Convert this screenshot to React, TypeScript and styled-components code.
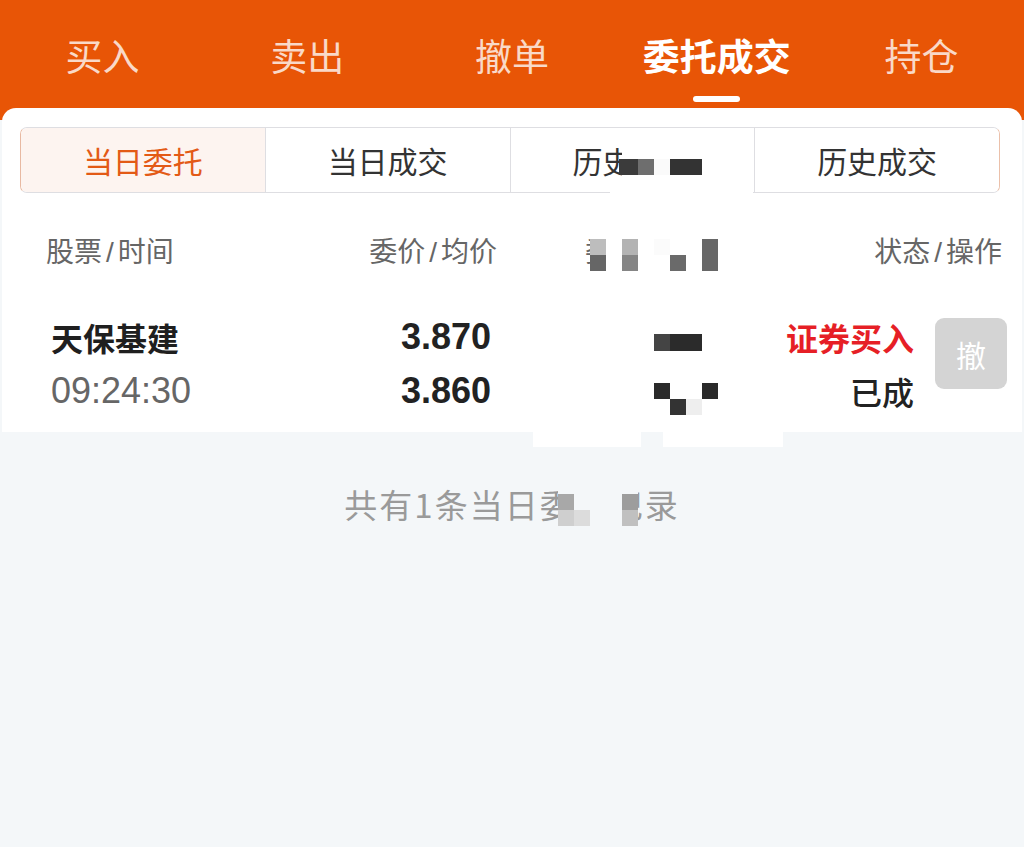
import React, { FC } from "react";
import styled, { createGlobalStyle } from "styled-components";

const GlobalStyle = createGlobalStyle`
  html, body {
    margin: 0;
    padding: 0;
    background: #f4f7f9;
  }
  body {
    font-family: "Liberation Sans", "Noto Sans CJK SC", sans-serif;
    -webkit-font-smoothing: antialiased;
  }
`;

const Page = styled.div`
  position: relative;
  width: 1024px;
  min-height: 847px;
  background: #f4f7f9;
  overflow: hidden;
`;

const TopBar = styled.nav`
  display: flex;
  height: 120px;
  background: #e85506;
`;

const TopTab = styled.div<{ $active?: boolean }>`
  flex: 1;
  display: flex;
  flex-direction: column;
  align-items: center;
  padding-top: 30px;
  font-family: "Noto Sans CJK SC", sans-serif;
  font-size: 37px;
  line-height: 50px;
  font-weight: ${(p) => (p.$active ? 700 : 400)};
  color: ${(p) => (p.$active ? "#ffffff" : "rgba(255, 255, 255, 0.78)")};
`;

const Indicator = styled.span<{ $show?: boolean }>`
  margin-top: 16px;
  width: 47px;
  height: 6px;
  border-radius: 3px;
  background: ${(p) => (p.$show ? "#ffffff" : "transparent")};
`;

const Card = styled.section`
  position: relative;
  margin: -12px 2px 0;
  padding-top: 19px;
  background: #ffffff;
  border-radius: 14px 14px 0 0;
`;

const Segments = styled.div`
  display: flex;
  margin: 0 22px 0 18px;
  height: 66px;
  box-sizing: border-box;
  border: 1px solid #dedee2;
  border-left-color: #e8b9a2;
  border-right-color: #ebc0aa;
  border-radius: 7px;
  overflow: hidden;
`;

const Segment = styled.div<{ $active?: boolean }>`
  flex: 1;
  display: flex;
  align-items: center;
  justify-content: center;
  font-family: "Noto Sans CJK SC", sans-serif;
  font-size: 30px;
  color: ${(p) => (p.$active ? "#e35a16" : "#333333")};
  background: ${(p) => (p.$active ? "#fdf4f0" : "#ffffff")};
  & + & {
    border-left: 1px solid #dedee2;
  }
`;

const HeadRow = styled.div`
  display: flex;
  align-items: center;
  height: 114px;
  padding: 0 20px 0 44px;
  font-family: "Noto Sans CJK SC", sans-serif;
  font-size: 28px;
  color: #666666;
`;

const HeadCell = styled.div<{ $w?: number; $align?: string; $offset?: number }>`
  width: ${(p) => (p.$w ? `${p.$w}px` : "auto")};
  flex: ${(p) => (p.$w ? "none" : "1")};
  margin-left: ${(p) => p.$offset || 0}px;
  text-align: ${(p) => p.$align || "left"};
`;

const Slash = styled.span`
  margin: 0 4px;
  font-family: "Liberation Sans", sans-serif;
`;

const OrderRow = styled.div`
  display: flex;
  align-items: flex-start;
  padding: 3px 15px 14px 49px;
`;

const Cell = styled.div<{ $w?: number; $align?: string }>`
  display: flex;
  flex-direction: column;
  width: ${(p) => (p.$w ? `${p.$w}px` : "auto")};
  flex: ${(p) => (p.$w ? "none" : "1")};
  align-items: ${(p) => (p.$align === "right" ? "flex-end" : "flex-start")};
`;

const StockName = styled.span`
  font-family: "Noto Sans CJK SC", sans-serif;
  font-size: 32px;
  line-height: 54px;
  font-weight: 600;
  color: #1f1f1f;
`;

const Time = styled.span`
  font-size: 36px;
  line-height: 54px;
  color: #666666;
`;

const Price = styled.span`
  font-size: 36px;
  line-height: 54px;
  font-weight: 700;
  color: #222222;
`;

const Status = styled.span<{ $tone?: "buy" | "plain" }>`
  font-family: "Noto Sans CJK SC", sans-serif;
  font-size: 32px;
  line-height: 54px;
  font-weight: ${(p) => (p.$tone === "buy" ? 600 : 500)};
  color: ${(p) => (p.$tone === "buy" ? "#e61f26" : "#222222")};
`;

const CancelButton = styled.button`
  margin: 8px 0 0 21px;
  width: 72px;
  height: 71px;
  border: none;
  border-radius: 9px;
  background: #d4d4d4;
  color: #ffffff;
  font-family: "Noto Sans CJK SC", sans-serif;
  font-size: 30px;
  padding: 0;
`;

const Footer = styled.div`
  padding-top: 47px;
  text-align: center;
  font-family: "Noto Sans CJK SC", sans-serif;
  font-size: 33px;
  line-height: 50px;
  letter-spacing: 2px;
  color: #9a9a9a;
`;

const Mosaic = styled.svg`
  position: absolute;
  top: 0;
  left: 0;
  pointer-events: none;
`;

type Block = [number, number, number, number, string];

// redaction blocks laid over the screenshot
const blocks: Block[] = [
  [622, 136, 131, 60, "#ffffff"],
  [610, 176, 14, 20, "#ffffff"],
  [590, 225, 193, 207, "#ffffff"],
  [533, 432, 108, 15, "#ffffff"],
  [663, 432, 120, 15, "#ffffff"],
  [558, 486, 80, 46, "#f4f7f9"],
  [619, 159, 19, 16, "#3b3b3b"],
  [638, 159, 16, 16, "#6e6e6e"],
  [654, 159, 16, 16, "#fafafa"],
  [670, 159, 32, 16, "#333333"],
  [590, 239, 16, 16, "#bdbdbd"],
  [590, 255, 16, 16, "#666666"],
  [622, 239, 16, 16, "#b3b3b3"],
  [622, 255, 16, 16, "#858585"],
  [654, 239, 16, 16, "#fbfbfb"],
  [670, 255, 16, 16, "#6a6a6a"],
  [702, 239, 16, 32, "#676767"],
  [654, 334, 16, 17, "#444444"],
  [670, 334, 32, 17, "#2b2b2b"],
  [654, 383, 16, 16, "#2a2a2a"],
  [702, 383, 16, 16, "#2a2a2a"],
  [670, 399, 16, 16, "#333333"],
  [686, 399, 16, 16, "#eeeeee"],
  [558, 494, 16, 16, "#a8a8a8"],
  [558, 510, 16, 16, "#cfcfcf"],
  [574, 510, 16, 16, "#dcdcdc"],
  [622, 494, 16, 16, "#9d9d9d"],
  [622, 510, 16, 16, "#c0c0c0"],
];

const topTabs = ["买入", "卖出", "撤单", "委托成交", "持仓"];
const segments = ["当日委托", "当日成交", "历史委托", "历史成交"];

const App: FC = () => {
  return (
    <Page>
      <GlobalStyle />
      <TopBar>
        {topTabs.map((t) => (
          <TopTab key={t} $active={t === "委托成交"}>
            {t}
            <Indicator $show={t === "委托成交"} />
          </TopTab>
        ))}
      </TopBar>
      <Card>
        <Segments>
          {segments.map((s, i) => (
            <Segment key={s} $active={i === 0}>
              {s}
            </Segment>
          ))}
        </Segments>
        <HeadRow>
          <HeadCell $w={300}>
            股票<Slash>/</Slash>时间
          </HeadCell>
          <HeadCell $w={151} $align="right">
            委价<Slash>/</Slash>均价
          </HeadCell>
          <HeadCell $w={200} $offset={88}>
            委量<Slash>/</Slash>成交
          </HeadCell>
          <HeadCell $align="right">
            状态<Slash>/</Slash>操作
          </HeadCell>
        </HeadRow>
        <OrderRow>
          <Cell $w={300}>
            <StockName>天保基建</StockName>
            <Time>09:24:30</Time>
          </Cell>
          <Cell $w={140} $align="right">
            <Price>3.870</Price>
            <Price>3.860</Price>
          </Cell>
          <Cell />
          <Cell $align="right">
            <Status $tone="buy">证券买入</Status>
            <Status>已成</Status>
          </Cell>
          <CancelButton>撤</CancelButton>
        </OrderRow>
      </Card>
      <Footer>共有1条当日委托记录</Footer>
      <Mosaic width={1024} height={847} viewBox="0 0 1024 847">
        {blocks.map(([x, y, w, h, c], i) => (
          <rect key={i} x={x} y={y} width={w} height={h} fill={c} />
        ))}
      </Mosaic>
    </Page>
  );
};

export default App;
